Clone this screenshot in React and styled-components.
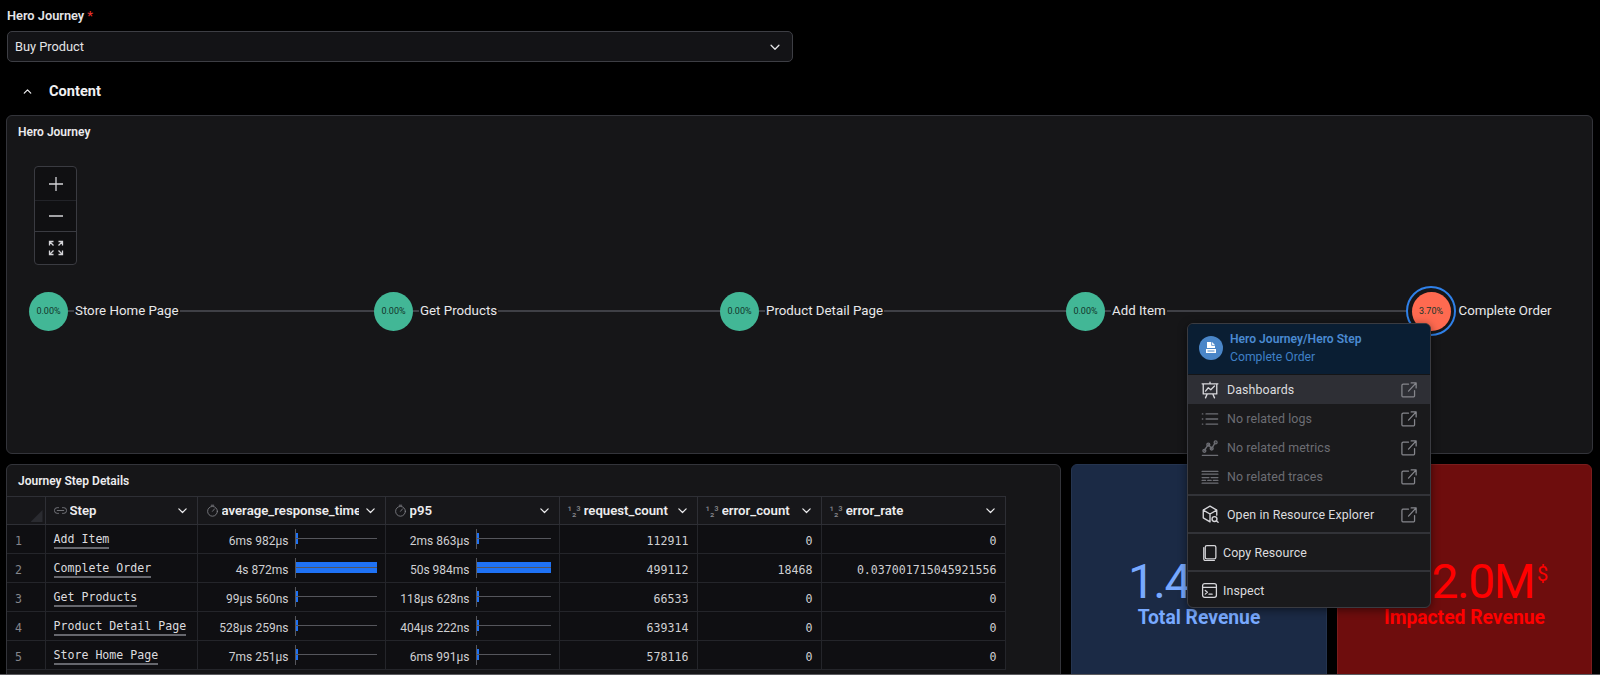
import React from "react";
import styled, { createGlobalStyle } from "styled-components";

const SANS = `"Roboto", "Noto Sans", sans-serif`;
const MONO = `"DejaVu Sans Mono", "Liberation Mono", monospace`;

const Global = createGlobalStyle`
  html, body { margin: 0; padding: 0; background: #000; }
  body { font-family: ${SANS}; color: #e8e8ea; }
  * { box-sizing: border-box; }
`;

const Page = styled.div`
  width: 1600px; height: 675px; overflow: hidden; position: relative;
  padding: 8px 7px 0 6px; background: #000; border-bottom: 1.5px solid #5a5a5e;
`;
const FieldLabel = styled.div`
  font-size: 12.8px; font-weight: 600; line-height: 16px; color: #e4e4e7; margin-left: 1px;
`;
const Star = styled.span` color: #e5322d; margin-left: 3px; `;
const Select = styled.div`
  width: 786px; height: 31px; margin: 7px 0 0 1px; padding: 0 10px 0 7px;
  display: flex; align-items: center; justify-content: space-between;
  background: #131316; border: 1px solid #3d3e44; border-radius: 5px;
  font-size: 12.8px; color: #e4e4e7;
`;
const SectionHeader = styled.div`
  height: 24px; margin: 17px 0 12px 15px; display: flex; align-items: center; gap: 15px;
  font-size: 14.6px; font-weight: 700; color: #f0f0f2;
`;
const Panel = styled.section`
  background: #161618; border: 1px solid #33343a; border-radius: 6px; overflow: hidden;
`;
const JourneyPanel = styled(Panel)` height: 339px; `;
const PanelTitle = styled.h3`
  margin: 0; height: 31px; padding: 0 11px; display: flex; align-items: center;
  font-size: 12px; font-weight: 600; color: #ececee;
`;
const Canvas = styled.div` position: relative; height: 306px; `;
const ZoomBox = styled.div`
  position: absolute; left: 27px; top: 19px; width: 43px; height: 99px;
  display: flex; flex-direction: column; background: #101012;
  border: 1px solid #3a3b41; border-radius: 4px;
`;
const ZoomBtn = styled.div`
  height: ${p => p.$h}px; display: flex; align-items: center; justify-content: center;
  color: #d4d4d8; border-top: ${p => p.$line ? `1px solid ${p.$line}` : "none"};
`;
const Edge = styled.div`
  position: absolute; left: 42px; width: 1383px; top: 162.5px; height: 2px; background: #3f4046;
`;
const Node = styled.div`
  position: absolute; top: 144.5px; display: flex; align-items: center;
`;
const Dot = styled.div`
  width: 39px; height: 39px; border-radius: 50%; background: ${p => p.$c};
  display: flex; align-items: center; justify-content: center; flex: none;
  font-size: 9px; color: #12352b;
`;
const Ring = styled.div`
  width: 50px; height: 50px; margin: -5.5px -4.5px -5.5px -5.5px; border-radius: 50%; border: 2px solid #2f80e8;
  background: #161618; display: flex; align-items: center; justify-content: center; flex: none;
`;
const NodeLabel = styled.span`
  margin-left: 6px; padding: 0 1px 0 1px; font-size: 13.3px; line-height: 18px; color: #e8e8ea;
  background: #161618; white-space: nowrap;
`;
const Row = styled.div`
  display: grid; grid-template-columns: 1055px 256px 255px; column-gap: 10px; margin-top: 10px;
`;
const TablePanel = styled(Panel)` height: 260px; `;
const Table = styled.table`
  border-collapse: collapse; table-layout: fixed; width: 998px; background: #0f0f12;
`;
const Th = styled.th`
  position: relative; height: 28px; padding: 0 8px 0 8px; background: #17171a; text-align: left;
  border: 1px solid #2e2f35; border-left: ${p => p.$first ? "none" : "1px solid #2e2f35"};
  font-size: 13.2px; font-weight: 600; color: #ececee;
`;
const ThInner = styled.div` display: flex; align-items: center; gap: 3px; `;
const ThText = styled.span` flex: 1; min-width: 0; margin-right: 2px; overflow: hidden; white-space: nowrap; `;
const TypeGlyph = styled.span` display: flex; color: #85868c; font-size: ${p => p.$fs || 10}px; font-weight: 400; flex: none; `;
const Corner = styled.div`
  position: absolute; right: 2px; bottom: 2px; width: 12px; height: 12px;
  background: #2a2b30; clip-path: polygon(100% 0, 100% 100%, 0 100%);
`;
const Td = styled.td`
  height: 29px; padding: 3px 8px 0 8px; border: 1px solid #24252a;
  border-left: ${p => p.$first ? "none" : "1px solid #24252a"};
  font-family: ${MONO}; font-size: 11.6px; color: #cfd0d3;
  text-align: ${p => p.$right ? "right" : "left"};
`;
const IndexCell = styled(Td)` color: #85868c; `;
const StepLink = styled.span`
  display: inline-block; line-height: 13px; padding-bottom: 1px; color: #dcdcdf;
  border-bottom: 2px solid #66676d;
`;
const DurationWrap = styled.div`
  display: flex; align-items: center; justify-content: flex-end; gap: 6px; height: 100%;
  font-family: ${SANS}; font-size: 12px; color: #cfd0d3; white-space: nowrap;
`;
const Track = styled.div`
  position: relative; flex: none; width: ${p => p.$w}px; height: 20px; margin-top: -3px;
  border-left: 1px solid #55565c;
`;
const TrackLine = styled.div`
  position: absolute; left: 0; right: 0; top: 9px; height: 1px; background: #55565c; z-index: 1;
`;
const TrackFill = styled.div`
  position: absolute; left: 0; top: 4px; height: 11px; background: #1f72f5;
`;
const StatCard = styled.div`
  height: 260px; padding-top: 92px; display: flex; flex-direction: column; align-items: center;
  background: ${p => p.$bg}; color: ${p => p.$fg}; border: 1px solid ${p => p.$border}; border-radius: 6px;
`;
const StatValue = styled.div`
  display: flex; align-items: flex-start; font-size: 48px; font-weight: 400; line-height: 50px;
  letter-spacing: -1.5px; white-space: nowrap;
`;
const StatUnit = styled.span` font-size: 20px; line-height: 34px; font-weight: 400; margin-left: 3px; letter-spacing: 0; `;
const StatLabel = styled.div` font-size: 19.3px; font-weight: 700; line-height: 22px; `;

const Menu = styled.div`
  position: absolute; left: 1187px; top: 323px; width: 244px; height: 285px; z-index: 5;
  display: flex; flex-direction: column; overflow: hidden;
  background: #1a1a1c; border: 1px solid #3a3b41; border-radius: 6px;
  box-shadow: 0 2px 8px rgba(0,0,0,.5);
`;
const MenuHead = styled.div`
  height: 51px; flex: none; padding: 0 0 3px 11px; display: flex; align-items: center; gap: 7px;
  background: #0a1e33; border-bottom: 1px solid #141517;
`;
const HeadIcon = styled.div`
  width: 24px; height: 24px; border-radius: 50%; background: #4a86c8;
  display: flex; align-items: center; justify-content: center; flex: none;
`;
const HeadTexts = styled.div` display: flex; flex-direction: column; gap: 2px; `;
const HeadTitle = styled.div` font-size: 12.1px; line-height: 16px; font-weight: 600; color: #4a8ad2; `;
const HeadSub = styled.div` font-size: 12.2px; line-height: 16px; color: #3f80c6; `;
const MenuRow = styled.div`
  height: ${p => p.$h}px; flex: none; display: flex; align-items: center; padding: 0 13px;
  gap: ${p => p.$gap}px; font-size: 12.4px;
  color: ${p => p.$off ? "#6c6d73" : "#dcdcdf"};
  background: ${p => p.$on ? "#2e2f35" : "transparent"};
  border-top: ${p => p.$line ? "2px solid #323338" : "none"};
  margin-top: ${p => p.$gapTop || 0}px;
`;
const MenuText = styled.span` flex: 1; white-space: nowrap; letter-spacing: .1px; `;
const RowIcon = styled.span` display: flex; flex: none; color: ${p => p.$off ? "#6c6d73" : "#d6d6da"}; `;
const Launch = styled.span` display: flex; flex: none; color: #85868c; `;

const Svg = ({ size = 16, children, sw = 1.2 }) => (
  <svg width={size} height={size} viewBox="0 0 16 16" fill="none" stroke="currentColor" strokeWidth={sw} strokeLinecap="round" strokeLinejoin="round">{children}</svg>
);
const Chevron = ({ up, size = 14 }) => (
  <Svg size={size} sw={1.5}><path d={up ? "M4 10l4-4 4 4" : "M3.5 6l4.5 4.5L12.5 6"} /></Svg>
);
const LaunchIcon = () => (
  <Svg size={17}><path d="M8 3H3a1.2 1.2 0 0 0-1.2 1.2V14A1.2 1.2 0 0 0 3 15h9.5a1.2 1.2 0 0 0 1.2-1.2V9" /><path d="M8 9.5 15 2M10.5 1.8H15.2V6.5" /></Svg>
);
const IconDash = () => (
  <Svg size={18}><path d="M1 2.5h14M2 2.5v9h12v-9M8 1v1.5M5.5 11.5 4 15M10.5 11.5 12 15M4 9l2.5-3 2.2 1.8L12 4.5" /></Svg>
);
const IconList = () => (
  <Svg size={18}><path d="M1.2 3.5h.4M1.2 8h.4M1.2 12.5h.4M4.5 3.5h10.3M4.5 8h10.3M4.5 12.5h10.3" /></Svg>
);
const IconMetrics = () => (
  <Svg size={18}><path d="M1.2 14.5h13.6M3 10l3.5-5 3 3.5 3-5" /><circle cx="3" cy="10.5" r="1.3" /><circle cx="6.5" cy="5" r="1.3" /><circle cx="9.5" cy="8.5" r="1.3" /><circle cx="13" cy="3" r="1.3" /></Svg>
);
const IconTraces = () => (
  <Svg size={18}><path d="M1 3h14M1 5.5h14M1 8.5h6M9 8.5h6M1 11h3M6 11h3M11 11h4M1 13.5h14" /></Svg>
);
const IconCube = () => (
  <Svg size={18}><path d="M14 9V4.5L8 1 2 4.5v7L8 15M2 4.5 8 8l6-3.5M8 8v7" /><circle cx="12" cy="12.5" r="2.2" /><path d="M13.8 14.2 15.2 15.4" /></Svg>
);
const IconCopy = () => (
  <Svg size={17}><rect x="4" y="1.5" width="10" height="12.5" rx="1.5" /><path d="M2.6 3.5v10.3a1.8 1.8 0 0 0 1.8 1.8h8.2" /></Svg>
);
const IconTerm = () => (
  <Svg size={17}><rect x="1.5" y="1.5" width="13" height="13" rx="2" /><path d="M1.5 5h13M4 8l2 1.7L4 11.4M7.5 11.5h3" /></Svg>
);
const IconDoc = () => (
  <svg width="14" height="14" viewBox="0 0 14 14" fill="#fff"><path d="M3 1h5l3 3v3H3zM2 8h10v4H2z" /><path d="M7.6 1v3.4H11" fill="none" stroke="#4a86c8" strokeWidth=".8" /><path d="M3.5 9.5h7v1h-7z" fill="#4a86c8" /></svg>
);
const IconLink = () => (
  <Svg size={13} sw={1}><path d="M5.5 4.5H4a3.5 3.5 0 0 0 0 7h1.5M10.5 4.5H12a3.5 3.5 0 0 1 0 7h-1.5M4 8h8" /></Svg>
);
const IconTimer = () => (
  <Svg size={13} sw={1}><circle cx="8" cy="9" r="6" /><path d="M6.5 1.5h3M8 9l2.5-3" /></Svg>
);

const NODES = [
  { x: 22, label: "Store Home Page" },
  { x: 367, label: "Get Products" },
  { x: 713, label: "Product Detail Page" },
  { x: 1059, label: "Add Item" },
];
const COLS = [
  { w: 38, first: true, corner: true },
  { w: 152, label: "Step", icon: <IconLink /> },
  { w: 188, label: "average_response_time", icon: <IconTimer /> },
  { w: 174, label: "p95", icon: <IconTimer /> },
  { w: 138, label: "request_count", glyph: true },
  { w: 124, label: "error_count", glyph: true },
  { w: 184, label: "error_rate", glyph: true },
];
const ROWS = [
  ["Add Item", "6ms 982µs", 1.5, "2ms 863µs", 1.5, 112911, 0, "0"],
  ["Complete Order", "4s 872ms", 100, "50s 984ms", 100, 499112, 18468, "0.037001715045921556"],
  ["Get Products", "99µs 560ns", 1.5, "118µs 628ns", 1.5, 66533, 0, "0"],
  ["Product Detail Page", "528µs 259ns", 1.5, "404µs 222ns", 1.5, 639314, 0, "0"],
  ["Store Home Page", "7ms 251µs", 1.5, "6ms 991µs", 1.5, 578116, 0, "0"],
];

const Duration = ({ text, pct, w }) => (
  <DurationWrap>
    {text}
    <Track $w={w}>
      <TrackFill style={{ width: pct > 50 ? `${pct}%` : "2px" }} />
      <TrackLine />
    </Track>
  </DurationWrap>
);

export default function App() {
  return (
    <Page>
      <Global />
      <FieldLabel>Hero Journey<Star>*</Star></FieldLabel>
      <Select>Buy Product <Chevron /></Select>
      <SectionHeader><Chevron up size={13} />Content</SectionHeader>
      <JourneyPanel>
        <PanelTitle>Hero Journey</PanelTitle>
        <Canvas>
          <ZoomBox>
            <ZoomBtn $h={33}>
              <svg width="18" height="18" viewBox="0 0 18 18" stroke="currentColor" strokeWidth="1.3"><path d="M9 2v14M2 9h14" /></svg>
            </ZoomBtn>
            <ZoomBtn $h={31} $line="#222328">
              <svg width="18" height="18" viewBox="0 0 18 18" stroke="currentColor" strokeWidth="1.6"><path d="M2 9h14" /></svg>
            </ZoomBtn>
            <ZoomBtn $h={33} $line="#3a3b41">
              <svg width="16" height="16" viewBox="0 0 16 16" fill="none" stroke="currentColor" strokeWidth="1.3"><path d="M1.5 5.5v-4h4M1.5 1.5l4 4M14.5 5.5v-4h-4M14.5 1.5l-4 4M1.5 10.5v4h4M1.5 14.5l4-4M14.5 10.5v4h-4M14.5 14.5l-4-4" /></svg>
            </ZoomBtn>
          </ZoomBox>
          <Edge />
          {NODES.map(n => (
            <Node key={n.label} style={{ left: n.x }}>
              <Dot $c="#42b796">0.00%</Dot>
              <NodeLabel>{n.label}</NodeLabel>
            </Node>
          ))}
          <Node style={{ left: 1404.5 }}>
            <Ring><Dot $c="#ff6a50">3.70%</Dot></Ring>
            <NodeLabel>Complete Order</NodeLabel>
          </Node>
        </Canvas>
      </JourneyPanel>
      <Row>
        <TablePanel>
          <PanelTitle>Journey Step Details</PanelTitle>
          <Table>
            <colgroup>{COLS.map((c, i) => <col key={i} style={{ width: c.w }} />)}</colgroup>
            <thead>
              <tr>
                {COLS.map((c, i) => (
                  <Th key={i} $first={c.first}>
                    {c.corner ? <Corner /> : (
                      <ThInner>
                        {c.icon && <TypeGlyph>{c.icon}</TypeGlyph>}
                        {c.glyph && <TypeGlyph $fs={12}>¹₂³</TypeGlyph>}
                        <ThText>{c.label}</ThText>
                        <Chevron size={13} />
                      </ThInner>
                    )}
                  </Th>
                ))}
              </tr>
            </thead>
            <tbody>
              {ROWS.map((r, i) => (
                <tr key={r[0]}>
                  <IndexCell $first>{i + 1}</IndexCell>
                  <Td><StepLink>{r[0]}</StepLink></Td>
                  <Td><Duration text={r[1]} pct={r[2]} w={82} /></Td>
                  <Td><Duration text={r[3]} pct={r[4]} w={75} /></Td>
                  <Td $right>{r[5]}</Td>
                  <Td $right>{r[6]}</Td>
                  <Td $right>{r[7]}</Td>
                </tr>
              ))}
            </tbody>
          </Table>
        </TablePanel>
        <StatCard $bg="#1b2a45" $fg="#78a9ff" $border="#25344f">
          <StatValue>1.45M<StatUnit>$</StatUnit></StatValue>
          <StatLabel>Total Revenue</StatLabel>
        </StatCard>
        <StatCard $bg="#6e0d0d" $fg="#ff0000" $border="#7a1d1d">
          <StatValue>112.0M<StatUnit>$</StatUnit></StatValue>
          <StatLabel>Impacted Revenue</StatLabel>
        </StatCard>
      </Row>
      <Menu>
        <MenuHead>
          <HeadIcon><IconDoc /></HeadIcon>
          <HeadTexts>
            <HeadTitle>Hero Journey/Hero Step</HeadTitle>
            <HeadSub>Complete Order</HeadSub>
          </HeadTexts>
        </MenuHead>
        <MenuRow $h={29} $gap={8} $on><RowIcon><IconDash /></RowIcon><MenuText>Dashboards</MenuText><Launch><LaunchIcon /></Launch></MenuRow>
        <MenuRow $h={29} $gap={8} $off><RowIcon $off><IconList /></RowIcon><MenuText>No related logs</MenuText><Launch><LaunchIcon /></Launch></MenuRow>
        <MenuRow $h={29} $gap={8} $off><RowIcon $off><IconMetrics /></RowIcon><MenuText>No related metrics</MenuText><Launch><LaunchIcon /></Launch></MenuRow>
        <MenuRow $h={29} $gap={8} $off><RowIcon $off><IconTraces /></RowIcon><MenuText>No related traces</MenuText><Launch><LaunchIcon /></Launch></MenuRow>
        <MenuRow $h={38} $gap={8} $line $gapTop={3}><RowIcon><IconCube /></RowIcon><MenuText>Open in Resource Explorer</MenuText><Launch><LaunchIcon /></Launch></MenuRow>
        <MenuRow $h={38} $gap={5} $line><RowIcon><IconCopy /></RowIcon><MenuText>Copy Resource</MenuText></MenuRow>
        <MenuRow $h={38} $gap={5} $line><RowIcon><IconTerm /></RowIcon><MenuText>Inspect</MenuText></MenuRow>
      </Menu>
    </Page>
  );
}
